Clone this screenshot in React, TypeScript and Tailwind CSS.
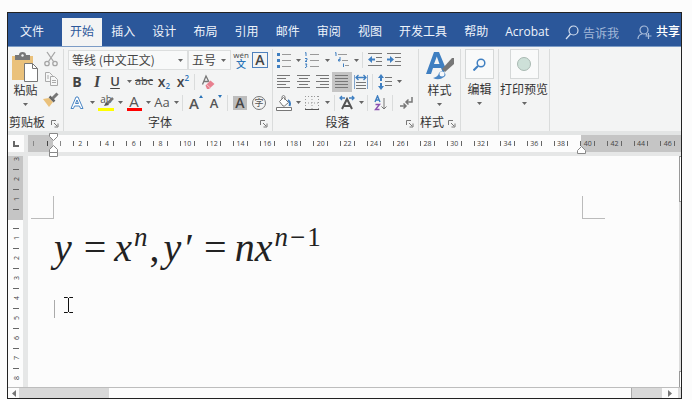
import { ReactNode } from "react";

const tabs = ["开始", "插入", "设计", "布局", "引用", "邮件", "审阅", "视图", "开发工具", "帮助", "Acrobat"];

const rulerNumbers = Array.from({ length: 23 }, (_, i) => (i + 1) * 2);

interface ToolProps {
    label: string;
    children: ReactNode;
    width?: string;
    active?: boolean;
}

function Tool({ label, children, width, active }: ToolProps) {
    return <button type="button" aria-label={label} title={label}
        className={`flex h-5 shrink-0 items-center justify-center ${width || "w-5"} ${active ? "bg-[#c5c5c5]" : "hover:bg-[#dde3ea]"}`}>
        {children}
    </button>
}

function Arrow() {
    return <svg width="5" height="3" viewBox="0 0 5 3" fill="#666"><path d="M0 0h5L2.5 3z" /></svg>
}

function Drop({ label, width }: { label: string, width?: string }) {
    return <Tool label={label} width={width || "w-2"}><Arrow /></Tool>
}

function Sep() {
    return <div className="mx-0.5 h-4 w-px shrink-0 bg-[#dadcdc]" />
}

// 16px icon canvas shared by the small toolbar icons
function Icon({ children }: { children: ReactNode }) {
    return <svg width="16" height="16" viewBox="0 0 16 16" fill="none" stroke="#777" strokeWidth="1" className="shrink-0">{children}</svg>
}

function Launcher() {
    return <button type="button" aria-label="更多选项" className="absolute right-1 bottom-[3px]">
        <svg width="8" height="8" viewBox="0 0 8 8" fill="none" stroke="#777"><path d="M.5 5V.5H5M3 3l3 3M7 3.500V7H3.500" /></svg>
    </button>
}

function Group({ title, width, children }: { title: string, width: string, children: ReactNode }) {
    return <section aria-label={title} className={`relative flex shrink-0 flex-col border-r border-[#dadcdc] ${width}`}>
        <div className="grow">{children}</div>
        <div className="h-4 pr-4 text-center text-xs leading-4 text-[#333]">{title}</div>
        <Launcher />
    </section>
}

function Picker({ id, label, value, width }: { id: string, label: string, value: string, width: string }) {
    return <div className={`relative h-5 shrink-0 border border-[#dcdede] bg-[#f8f9f9] ${width}`}>
        <label htmlFor={id} className="sr-only">{label}</label>
        <select id={id} className="block h-full w-full appearance-none bg-transparent pl-[3px] font-['Noto_Sans_CJK_SC',sans-serif] text-xs text-[#444] outline-none">
            <option>{value}</option>
        </select>
        <span className="pointer-events-none absolute inset-y-0 right-1 flex items-center"><Arrow /></span>
    </div>
}

function Clipboard() {
    return <section aria-label="剪贴板" className="relative flex w-14 shrink-0 flex-col border-r border-[#dadcdc]">
        <div className="flex grow justify-between pr-1">
            <button type="button" className="flex w-9 flex-col items-center pt-[3px] text-xs leading-4 text-[#333]">
                <svg width="27" height="30" viewBox="0 0 27 30">
                    <path d="M0 4h21v24H0z" fill="#eac17b" />
                    <path d="M3 3h4a3.500 3 0 0 1 7 0h4v5H3z" fill="#777" />
                    <circle cx="10.500" cy="3.500" r="1.200" fill="#f3f4f4" />
                    <path d="M12.500 11.500h8l5 5v13h-13z" fill="#fff" stroke="#777" />
                    <path d="M20.500 11.500v5h5" fill="none" stroke="#777" />
                </svg>
                <span className="mt-px">粘贴</span>
                <span className="mt-1"><Arrow /></span>
            </button>
            <div className="flex flex-col">
                <Tool label="剪切" width="w-4">
                    <Icon>
                        <g stroke="#a5a5a5" strokeWidth="1.300">
                            <path d="M4 1l6.500 9.500M12 1L5.500 10.500" />
                            <circle cx="4" cy="12.500" r="2.200" /><circle cx="12" cy="12.500" r="2.200" />
                        </g>
                    </Icon>
                </Tool>
                <Tool label="复制" width="w-4">
                    <Icon>
                        <g stroke="#aaa" fill="#f6f7f7">
                            <path d="M2.500 1.500h4l3 3v6h-7z" /><path d="M7.500 5.500h4l3 3v6h-7z" />
                            <path d="M4 5h2M4 7h2M9 9.500h4M9 11.500h4" />
                        </g>
                    </Icon>
                </Tool>
                <Tool label="格式刷" width="w-4">
                    <Icon>
                        <path d="M0 8l6-1 4 4-4 5z" fill="#eac17b" stroke="none" />
                        <path d="M6.500 5.500l5 5" stroke="#666" strokeWidth="2.500" />
                        <path d="M9.500 7.500l5-5" stroke="#777" strokeWidth="3" />
                    </Icon>
                </Tool>
            </div>
        </div>
        <div className="h-4 pl-px text-xs leading-4 text-[#333]">剪贴板</div>
        <Launcher />
    </section>
}

function FontGroup() {
    return <Group title="字体" width="w-[209px]">
        <div className="flex h-[22px] items-center pl-1">
            <Picker id="font-name" label="字体" value="等线 (中文正文)" width="w-[120px]" />
            <Picker id="font-size" label="字号" value="五号" width="w-[43px]" />
            <Tool label="拼音指南">
                <span className="flex flex-col items-center">
                    <span className="text-[8px] leading-[9px] text-[#444]">wén</span>
                    <span className="text-[10px] leading-[11px] font-medium text-[#2b74b8]">文</span>
                </span>
            </Tool>
            <Tool label="字符边框" width="w-[18px]">
                <span className="flex h-4 w-4 items-center justify-center border border-[#4f81bd] text-sm leading-4 font-semibold text-[#444]">A</span>
            </Tool>
        </div>
        <div className="flex h-[21px] items-center pl-0.5 text-[#444]">
            <Tool label="加粗" width="w-[22px]"><b className="text-sm">B</b></Tool>
            <Tool label="倾斜" width="w-[18px]"><i className="font-['Liberation_Serif',serif] text-base font-bold">I</i></Tool>
            <Tool label="下划线" width="w-[18px]"><span className="text-[13px] font-semibold underline underline-offset-2">U</span></Tool>
            <Drop label="下划线选项" width="w-2.5" />
            <Tool label="删除线"><s className="text-[11px]">abc</s></Tool>
            <Tool label="下标">
                <span className="flex items-end text-sm leading-4 font-semibold">x<span className="text-[8px] leading-[8px] text-[#2b74b8]">2</span></span>
            </Tool>
            <Tool label="上标" width="w-[18px]">
                <span className="flex items-start text-sm leading-4 font-semibold">x<span className="text-[8px] leading-[8px] text-[#2b74b8]">2</span></span>
            </Tool>
            <Sep />
            <Tool label="清除格式" width="w-[22px]">
                <Icon>
                    <path d="M2.500 10.500L6 2l3 6M3.500 7.500H8" strokeWidth="1.300" />
                    <path d="M5.500 11.500l5-5 4 3.500-5.500 5H7z" fill="#e8808f" stroke="none" />
                    <path d="M6.500 10.500l4 3.500" stroke="#f6c7cd" />
                </Icon>
            </Tool>
        </div>
        <div className="flex h-[21px] items-center pl-0.5 text-[#555]">
            <Tool label="文本效果" width="w-[22px]">
                <Icon><path d="M2 13.500L7 2h2l5 11.500h-2.500L10.500 11h-5l-1 2.500zM6.500 8.500h3L8 5z" fill="#fff" stroke="#4a86c5" /></Icon>
            </Tool>
            <Drop label="文本效果选项" />
            <Tool label="突出显示">
                <span className="relative flex h-4 w-4 flex-col justify-between">
                    <span className="text-[10px] leading-[9px]">ab</span>
                    <span className="h-[3px] bg-[#ffff00]" />
                    <svg width="11" height="10" viewBox="0 0 11 10" className="absolute top-0.5 left-[5px]"><path d="M10 1L4 7" stroke="#777" strokeWidth="2.500" /><path d="M1 9l2-4 3 3z" fill="#555" /></svg>
                </span>
            </Tool>
            <Drop label="突出显示选项" />
            <Tool label="字体颜色">
                <span className="flex h-4 w-[15px] flex-col items-center justify-between">
                    <span className="text-[15px] leading-[12px] font-medium">A</span>
                    <span className="h-[3px] w-full bg-[#ff0000]" />
                </span>
            </Tool>
            <Drop label="字体颜色选项" />
            <Tool label="更改大小写"><span className="text-[13px]">Aa</span></Tool>
            <Drop label="大小写选项" />
            <Sep />
            <Tool label="增大字号" width="w-[22px]">
                <span className="flex items-start text-[15px] leading-4 font-semibold">A<svg width="4" height="3" viewBox="0 0 4 3" fill="#2b74b8"><path d="M0 3h4L2 0z" /></svg></span>
            </Tool>
            <Tool label="减小字号" width="w-[18px]">
                <span className="flex items-start text-[13px] leading-4 font-semibold">A<svg width="4" height="3" viewBox="0 0 4 3" fill="#2b74b8"><path d="M0 0h4L2 3z" /></svg></span>
            </Tool>
            <Sep />
            <Tool label="字符底纹">
                <span className="flex h-[14px] w-[14px] items-center justify-center bg-[#bdbdbd] text-sm leading-[14px] font-semibold text-[#444]">A</span>
            </Tool>
            <Tool label="带圈字符" width="w-[18px]">
                <span className="flex h-[14px] w-[14px] items-center justify-center rounded-full border border-[#777] text-[9px] leading-3">字</span>
            </Tool>
        </div>
    </Group>
}

function ParagraphGroup() {
    return <Group title="段落" width="w-[146px]">
        <div className="flex h-[22px] items-center pl-px">
            <Tool label="项目符号">
                <Icon><path d="M6 2.500h9M6 8.500h9M6 14.500h9" stroke="#999" /><path d="M1 1h3v3H1zM1 7h3v3H1zM1 13h3v3H1z" fill="#3f7fc1" stroke="none" /></Icon>
            </Tool>
            <Drop label="项目符号选项" />
            <Tool label="编号">
                <Icon><path d="M6 2.500h9M6 8.500h9M6 14.500h9" stroke="#999" /><path d="M1 1l1-.5V4M1 6.500h2v1.500l-2 1.500h2M1 12h2l-1 1.500 1 .5-1 1.500H1" stroke="#3f7fc1" /></Icon>
            </Tool>
            <Drop label="编号选项" width="w-2.5" />
            <Tool label="多级列表">
                <Icon><path d="M4 2.500h9M8 8.500h6M11 13.500h4" stroke="#999" /><path d="M1 1l1-.5V4M6 5v4H4.500V7.500H6M9.500 11.500V15" stroke="#3f7fc1" /></Icon>
            </Tool>
            <Drop label="多级列表选项" />
            <Sep />
            <Tool label="减少缩进量">
                <Icon><path d="M1 1.500h14M9 5.500h6M9 9.500h6M1 13.500h14" /><path d="M1 7.500l4-3.500v2.500h3v2H5V11z" fill="#3f7fc1" stroke="none" /></Icon>
            </Tool>
            <Tool label="增加缩进量" width="w-[18px]">
                <Icon><path d="M1 1.500h14M9 5.500h6M9 9.500h6M1 13.500h14" /><path d="M8 7.500L4 4v2.500H1v2h3V11z" fill="#3f7fc1" stroke="none" /></Icon>
            </Tool>
        </div>
        <div className="flex h-[21px] items-center pl-px">
            <Tool label="左对齐"><Icon><path d="M1 1.500h13M1 4.500h9M1 7.500h13M1 10.500h9M1 13.500h13" /></Icon></Tool>
            <Tool label="居中"><Icon><path d="M1 1.500h13M3 4.500h9M1 7.500h13M3 10.500h9M1 13.500h13" /></Icon></Tool>
            <Tool label="右对齐" width="w-[18px]"><Icon><path d="M1 1.500h13M5 4.500h9M1 7.500h13M5 10.500h9M1 13.500h13" /></Icon></Tool>
            <Tool label="两端对齐" active><Icon><path d="M1 1.500h13M1 4.500h13M1 7.500h13M1 10.500h13M1 13.500h13" stroke="#777" /></Icon></Tool>
            <Tool label="分散对齐" width="w-[18px]">
                <Icon>
                    <path d="M1.500 1v14M14.500 1v14" stroke="#7fa3cc" />
                    <path d="M3 3.500h10M5.500 1L3 3.500 5.500 6M10.500 1L13 3.500 10.500 6" stroke="#3f7fc1" strokeWidth="1.300" />
                    <path d="M3 8.500h10M3 11.500h10M3 14.500h10" />
                </Icon>
            </Tool>
            <Sep />
            <Tool label="行距">
                <Icon><path d="M8 3.500h7M8 7.500h7M8 11.500h7" /><path d="M4 0l3 4H5v8h2l-3 4-3-4h2V4H1z" fill="#3f7fc1" stroke="none" /><path d="M2 8h4" stroke="#f3f4f4" strokeWidth="2" /></Icon>
            </Tool>
            <Drop label="行距选项" />
        </div>
        <div className="flex h-[21px] items-center pl-px">
            <Tool label="底纹">
                <Icon>
                    <path d="M.5 12.500h15v3H.5z" fill="#fff" />
                    <path d="M3.500 6.500l4-4 5 5-4 3.500H7zM6 4V1.500q1.500-2 3 0V5" fill="#fff" />
                    <path d="M12 5q3 2 1.500 6" stroke="#3f7fc1" strokeWidth="2" />
                </Icon>
            </Tool>
            <Drop label="底纹选项" />
            <Tool label="边框">
                <Icon><path d="M1.500 1v13M8 1v13M14.500 1v13M1 1.500h14M1 8h14" stroke="#999" strokeDasharray="1 2" /><path d="M1 14.500h14" stroke="#555" /></Icon>
            </Tool>
            <Drop label="边框选项" width="w-2.5" />
            <Sep />
            <Tool label="中文版式">
                <Icon><path d="M3 14l5-10 5 10M5 11h6" stroke="#555" strokeWidth="2" /><path d="M1 3h5M10 3h5M3 1L1 3l2 2M13 1l2 2-2 2" stroke="#3f7fc1" strokeWidth="1.300" /></Icon>
            </Tool>
            <Drop label="中文版式选项" />
            <Sep />
            <Tool label="排序">
                <Icon>
                    <path d="M3 7l2.500-6L8 7M4 5h3" stroke="#3f7fc1" strokeWidth="1.400" />
                    <path d="M3.500 9.500h4l-4 5h4" stroke="#8a4fb0" strokeWidth="1.400" />
                    <path d="M12 3v11M9.500 11.500L12 14l2.500-2.500" />
                </Icon>
            </Tool>
            <Sep />
            <Tool label="显示编辑标记" width="w-[22px]">
                <Icon><path d="M14 2v5H8M10.500 4.500L8 7l2.500 2.500M2 11h6M5.500 8.500L8 11l-2.500 2.500" strokeWidth="1.500" /></Icon>
            </Tool>
        </div>
    </Group>
}

function StyleGroup() {
    return <section aria-label="样式" className="relative flex w-[42px] shrink-0 flex-col border-r border-[#dadcdc]">
        <button type="button" className="flex grow flex-col items-center pt-[3px] text-xs leading-4 text-[#333]">
            <svg width="28" height="28" viewBox="0 0 28 28">
                <path d="M0 22L8 0h5l7 17-3 4-2-5H7l-2 6zM8 12h5.500L10.800 4.500z" fill="#3f7fc1" />
                <path d="M16 17L26 6h2v6l-9 8z" fill="#777" />
                <path d="M7 26q5-1 6-5 2-3 5-1 3 3 0 5-5 4-11 1z" fill="#4a86c5" />
                <circle cx="16" cy="22" r="2.500" fill="#f5f7fa" />
            </svg>
            <span className="mt-[3px]">样式</span>
            <span className="mt-1"><Arrow /></span>
        </button>
        <div className="h-4 pl-px text-xs leading-4 text-[#333]">样式</div>
        <Launcher />
    </section>
}

function BoxButton({ title, width, children }: { title: string, width: string, children: ReactNode }) {
    return <button type="button" className={`flex shrink-0 flex-col items-center border-r border-[#dadcdc] text-xs leading-4 text-[#333] ${width}`}>
        <span className="flex h-[30px] w-[29px] items-center justify-center border border-[#d5d8d8] bg-[#f9fafa]">{children}</span>
        <span className="mt-[3px] whitespace-nowrap">{title}</span>
        <span className="mt-1"><Arrow /></span>
    </button>
}

function TabBar() {
    return <header className="flex h-[34px] shrink-0 overflow-hidden border-b border-[#7c9cc6] bg-[#2b579a] pt-[5px] text-xs text-[#eef3fa]">
        <button type="button" className="w-[54px] shrink-0 pr-1.5">文件</button>
        <nav className="flex min-w-0 grow justify-between">
            {tabs.map((tab, i) => <button key={tab} type="button"
                className={`shrink-0 whitespace-nowrap px-2 ${i === 0 ? "bg-[#f3f4f4] text-[#2b579a]" : ""}`}>{tab}</button>)}
        </nav>
        <div className="flex w-[124px] shrink-0 items-center pl-2">
            <svg width="14" height="15" viewBox="0 0 14 15" fill="none" stroke="#d5e0f0" strokeWidth="1.200" className="shrink-0"><circle cx="8.500" cy="5.500" r="4.500" /><path d="M5.500 9L1 14" /></svg>
            <label htmlFor="tell-me" className="sr-only">告诉我</label>
            <input id="tell-me" placeholder="告诉我" className="ml-1 h-6 w-12 shrink-0 bg-transparent font-['Noto_Sans_CJK_SC',sans-serif] leading-5 outline-none placeholder:text-[#a3b8d8]" />
            <button type="button" className="ml-1.5 flex shrink-0 items-center gap-1 font-medium whitespace-nowrap text-white">
                <svg width="15" height="15" viewBox="0 0 15 15" fill="none" stroke="#a9bddb" strokeWidth="1.200"><circle cx="7" cy="5" r="4" /><path d="M1 14q0-4 4-5M9 9l1 1M11.500 8v6M8.500 11h6" /></svg>
                共享
            </button>
        </div>
    </header>
}

function HorizontalRuler() {
    return <div className="flex shrink-0 border-y-4 border-t-[#e3e5e5] border-b-[#e6e7e7] bg-[#e8e9e9]">
        <div className="flex h-[17px] w-4 shrink-0 items-center justify-center bg-[#fcfcfc]">
            <svg width="6" height="6" viewBox="0 0 6 6"><path d="M1 0v5h5" fill="none" stroke="#666" strokeWidth="2" /></svg>
        </div>
        <div className="relative ml-1 flex h-[17px] grow">
            <div className="w-[25px] shrink-0 bg-[#c5c5c5]" />
            <div className="grow bg-[#fcfcfc]" />
            <div className="w-[100px] shrink-0 bg-[#c5c5c5]" />
            <div className="absolute inset-0 flex items-center text-[7px] leading-none text-[#444]">
                <div className="flex w-[39px] shrink-0 justify-between pr-1.5 pl-[5px]">
                    <span className="h-[5px] w-px bg-[#888]" />
                    <span className="h-[5px] w-px bg-[#444]" />
                    <span className="h-[5px] w-px bg-[#888]" />
                </div>
                {rulerNumbers.map((n) => <div key={n} className="flex min-w-0 flex-1 items-center justify-between px-1.5">
                    <span className="h-[5px] w-px bg-[#666]" />{n}<span className="h-[5px] w-px bg-[#666]" />
                </div>)}
            </div>
            {/* indent markers */}
            <svg width="9" height="24" viewBox="0 0 9 24" fill="#fff" stroke="#888" className="absolute -top-0.5 left-[21px]">
                <path d="M.5.5h8v3l-4 4-4-4zM4.500 12.500l4 4v3h-8v-3zM.5 19.500h8v4h-8z" />
            </svg>
            <svg width="9" height="8" viewBox="0 0 9 8" fill="#fff" stroke="#888" className="absolute right-[95px] -bottom-0.5">
                <path d="M4.500.5l4 4v3h-8v-3z" />
            </svg>
        </div>
    </div>
}

function RulerNumber({ n }: { n: number }) {
    return <span className="flex h-2.5 w-2.5 -rotate-90 items-center justify-center text-[7px] leading-none">{n}</span>
}

function RulerTick() {
    return <span className="flex h-2.5 items-center"><span className="h-px w-1.5 bg-[#666]" /></span>
}

function VerticalRuler() {
    return <div className="flex w-5 shrink-0 flex-col border-r-[5px] border-[#e6e7e7] text-[#444]">
        <div className="flex h-[64px] shrink-0 flex-col items-center justify-end overflow-hidden bg-[#c5c5c5] pb-1.5">
            {[3, 2, 1].map((n) => <div key={n} className="flex shrink-0 flex-col items-center"><RulerNumber n={n} /><RulerTick /></div>)}
        </div>
        <div className="flex flex-col items-center pt-[3px]">
            {[1, 2, 3, 4, 5, 6, 7, 8].map((n) => <div key={n} className="flex flex-col items-center"><RulerTick /><RulerNumber n={n} /></div>)}
        </div>
    </div>
}

function Formula() {
    return <div className="flex items-baseline font-['Liberation_Serif',serif] text-[40px] leading-[48px] text-[#222]">
        <i>y</i>
        <span className="ml-3">=</span>
        <i className="ml-2">x</i>
        <sup className="top-[-15px] ml-0.5 text-[27px] leading-none italic">n</sup>
        <span className="ml-0.5">,</span>
        <i className="ml-1">y</i>
        <span className="ml-1">′</span>
        <span className="ml-2.5">=</span>
        <i className="ml-2">nx</i>
        <sup className="top-[-15px] ml-0.5 flex gap-0.5 text-[27px] leading-none"><i>n</i><span>−</span><span>1</span></sup>
    </div>
}

function Page() {
    return <main className="min-w-0 grow pt-10">
        <div className="flex pl-[3px]">
            <div className="h-[23px] w-[23px] border-r border-b border-[#bbb]" />
            <div className="grow" />
            <div className="mr-[74px] h-[23px] w-[23px] border-b border-l border-[#bbb]" />
        </div>
        <div className="pt-[5px] pl-[26px]">
            <Formula />
            <div className="mt-[23px] flex items-start gap-[9px]">
                <span className="mt-[5px] h-[18px] w-px bg-[#aaa]" />
                <svg width="9" height="16" viewBox="0 0 9 16" fill="none" stroke="#111" className="mt-0.5"><path d="M0 .5h3.500l1 1 1-1H9M0 15.500h3.500l1-1 1 1H9M4.500 1v14" /></svg>
            </div>
        </div>
    </main>
}

export default function App() {
    return <div lang="zh-CN" className="flex min-h-screen flex-col bg-[#fcfcfc] pt-3 pr-2.5 pb-px pl-[7px] font-['Open_Sans','Noto_Sans_CJK_SC',sans-serif]">
        <div className="flex grow flex-col border border-[#222] bg-[#fcfcfc]">
            <TabBar />
            <div className="flex h-[84px] shrink-0 overflow-hidden bg-[#f3f4f4] pt-0.5">
                <Clipboard />
                <FontGroup />
                <ParagraphGroup />
                <StyleGroup />
                <BoxButton title="编辑" width="w-[38px]">
                    <svg width="13" height="13" viewBox="0 0 13 13" fill="none" stroke="#3f7fc1" strokeWidth="1.500"><circle cx="8" cy="5" r="3.800" /><path d="M5 8l-4.500 4.500" strokeWidth="2" /></svg>
                </BoxButton>
                <BoxButton title="打印预览" width="w-[51px]">
                    <span className="h-[14px] w-[14px] rounded-full border border-[#a9b9b2] bg-[#cde0d8]" />
                </BoxButton>
            </div>
            <HorizontalRuler />
            <div className="flex grow">
                <VerticalRuler />
                <Page />
                <div className="flex w-0.5 shrink-0 flex-col bg-[#dcdcdc]">
                    <div className="h-[46px] border-y border-l border-[#999] bg-white" />
                    <div className="grow" />
                    <div className="h-4 border-t border-l border-[#999] bg-white" />
                </div>
            </div>
            <div className="flex h-[11px] shrink-0 border-t border-[#bdbdbd]">
                <button type="button" aria-label="向左滚动" className="flex w-[11px] items-center justify-center">
                    <svg width="4" height="7" viewBox="0 0 4 7" fill="#777"><path d="M4 0v7L0 3.500z" /></svg>
                </button>
                <div className="w-[90px] bg-[#d8d8d8]" />
                <div className="grow border-r border-[#aaa] bg-[#fcfcfc]" />
                <div className="w-[30px] bg-[#d8d8d8]" />
                <button type="button" aria-label="向右滚动" className="flex w-4 items-center justify-center">
                    <svg width="4" height="7" viewBox="0 0 4 7" fill="#777"><path d="M0 0v7l4-3.500z" /></svg>
                </button>
                <div className="w-[3px] bg-[#dcdcdc]" />
            </div>
        </div>
    </div>
}
